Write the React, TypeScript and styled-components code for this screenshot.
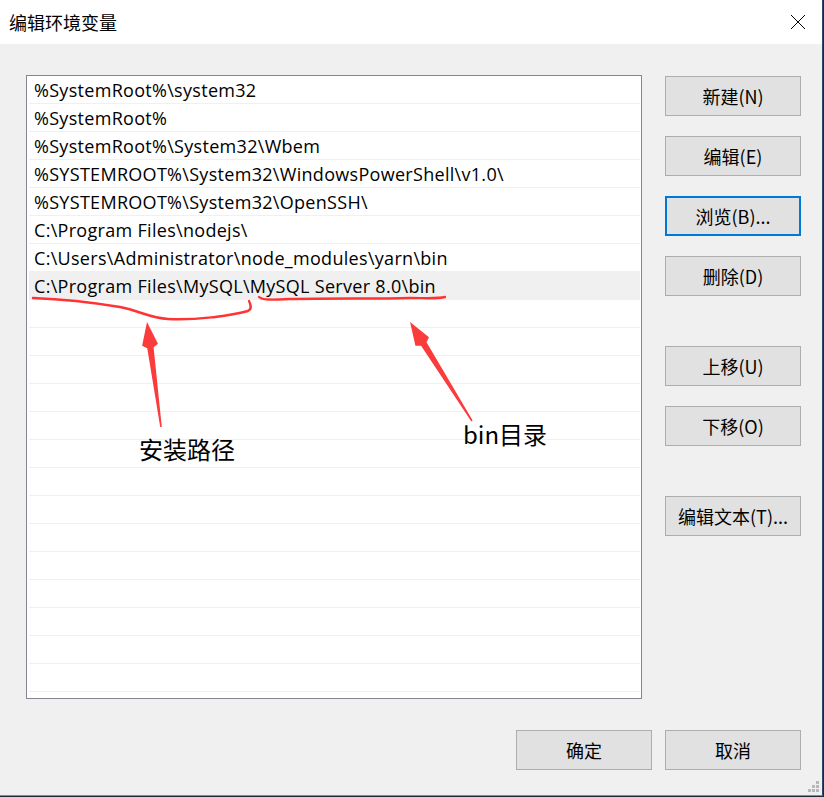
import React from 'react';
import styled, { createGlobalStyle } from 'styled-components';

const GlobalStyle = createGlobalStyle`
  html, body {
    margin: 0;
    padding: 0;
    background: #1c2b3c;
  }
  body {
    font-family: "Open Sans", "Noto Sans CJK SC", sans-serif;
    color: #000;
  }
`;

const Window = styled.div`
  position: relative;
  width: 822px;
  height: 795px;
  background: #f0f0f0;
  border-right: 1px solid #2b4a6b;
  border-bottom: 1px solid #8a8a8a;
  display: flex;
  flex-direction: column;
`;

const TitleBar = styled.div`
  height: 44px;
  background: #fff;
  display: flex;
  align-items: center;
  justify-content: space-between;
  padding: 0 0 0 9px;
`;

const Title = styled.span`
  font-family: "Noto Sans CJK SC", sans-serif;
  font-size: 18px;
  line-height: 1;
`;

const CloseButton = styled.div`
  width: 46px;
  height: 44px;
  display: flex;
  align-items: center;
  justify-content: center;
  margin-right: 1px;
`;

const Body = styled.div`
  flex: 1;
  display: grid;
  grid-template-columns: 616px 136px;
  column-gap: 23px;
  padding: 31px 21px 0 26px;
`;

const ListBox = styled.div`
  height: 622px;
  border: 1px solid #828790;
  background: #fff;
  padding: 0 1px;
  overflow: hidden;
`;

const Row = styled.div<{ $selected?: boolean }>`
  height: 27px;
  border-bottom: 1px solid #f0f0f0;
  margin-left: 1px;
  padding-left: 5px;
  display: flex;
  align-items: center;
  font-size: 18px;
  letter-spacing: 0.3px;
  white-space: nowrap;
  background: ${(p) => (p.$selected ? '#f0f0f0' : '#fff')};
`;

const ButtonColumn = styled.div`
  display: flex;
  flex-direction: column;
  padding-top: 1px;
`;

const Button = styled.button<{ $focused?: boolean; $gap?: number }>`
  width: 136px;
  height: 40px;
  margin-top: ${(p) => p.$gap ?? 0}px;
  background: #e1e1e1;
  border: ${(p) => (p.$focused ? '2px solid #0078d7' : '1px solid #adadad')};
  font-family: "Noto Sans CJK SC", sans-serif;
  font-size: 18px;
  color: #000;
  padding: 0;
  display: flex;
  align-items: center;
  justify-content: center;
`;

const Footer = styled.div`
  display: flex;
  justify-content: flex-end;
  gap: 13px;
  padding: 31px 21px 25px 0;
`;

const Grip = styled.div`
  position: absolute;
  right: 3px;
  bottom: 3px;
  width: 11px;
  height: 11px;
  display: grid;
  grid-template-columns: repeat(3, 3px);
  grid-template-rows: repeat(3, 3px);
  gap: 1px;
`;

const GripDot = styled.span<{ $on: boolean }>`
  background: ${(p) => (p.$on ? '#b8b8b8' : 'transparent')};
`;

const Overlay = styled.svg`
  position: absolute;
  left: 0;
  top: 0;
  pointer-events: none;
`;

const Note = styled.span<{ $x: number; $y: number }>`
  position: absolute;
  left: ${(p) => p.$x}px;
  top: ${(p) => p.$y}px;
  font-family: "Noto Sans CJK SC", sans-serif;
  font-size: 24px;
  line-height: 1;
  color: #000;
`;

const paths = [
  '%SystemRoot%\\system32',
  '%SystemRoot%',
  '%SystemRoot%\\System32\\Wbem',
  '%SYSTEMROOT%\\System32\\WindowsPowerShell\\v1.0\\',
  '%SYSTEMROOT%\\System32\\OpenSSH\\',
  'C:\\Program Files\\nodejs\\',
  'C:\\Users\\Administrator\\node_modules\\yarn\\bin',
  'C:\\Program Files\\MySQL\\MySQL Server 8.0\\bin',
];

const rows = [...paths, ...Array(14).fill('')];

const gripMap = [false, false, true, false, true, true, true, true, true];

// tapered red arrow: thin tail, widening shaft, triangular head
const Arrow = ({ tail, tip }: { tail: [number, number]; tip: [number, number] }) => {
  const dx = tip[0] - tail[0];
  const dy = tip[1] - tail[1];
  const len = Math.hypot(dx, dy);
  const ux = dx / len;
  const uy = dy / len;
  const nx = -uy;
  const ny = ux;
  const headLen = 26;
  const bx = tip[0] - ux * headLen;
  const by = tip[1] - uy * headLen;
  const pts = [
    [tail[0] + nx * 0.8, tail[1] + ny * 0.8],
    [bx + nx * 3.2, by + ny * 3.2],
    [bx + ux * 3 + nx * 8, by + uy * 3 + ny * 8],
    tip,
    [bx + ux * 3 - nx * 8, by + uy * 3 - ny * 8],
    [bx - nx * 3.2, by - ny * 3.2],
    [tail[0] - nx * 0.8, tail[1] - ny * 0.8],
  ];
  return <polygon points={pts.map((p) => p.join(',')).join(' ')} fill="#fb3c3c" />;
};

export default function App() {
  return (
    <>
      <GlobalStyle />
      <Window>
        <TitleBar>
          <Title>编辑环境变量</Title>
          <CloseButton>
            <svg width="16" height="16" viewBox="0 0 16 16">
              <path d="M1 1 L15 15 M15 1 L1 15" stroke="#000" strokeWidth="1" />
            </svg>
          </CloseButton>
        </TitleBar>
        <Body>
          <ListBox>
            {rows.map((text, i) => (
              <Row key={i} $selected={i === 7}>
                {text}
              </Row>
            ))}
          </ListBox>
          <ButtonColumn>
            <Button>新建(N)</Button>
            <Button $gap={20}>编辑(E)</Button>
            <Button $gap={20} $focused>浏览(B)...</Button>
            <Button $gap={20}>删除(D)</Button>
            <Button $gap={50}>上移(U)</Button>
            <Button $gap={20}>下移(O)</Button>
            <Button $gap={50}>编辑文本(T)...</Button>
          </ButtonColumn>
        </Body>
        <Footer>
          <Button>确定</Button>
          <Button>取消</Button>
        </Footer>
        <Grip>
          {gripMap.map((on, i) => (
            <GripDot key={i} $on={on} />
          ))}
        </Grip>

        <Overlay width="822" height="795">
          <path
            d="M33 298 C60 299 90 302 120 307 C140 311 150 318 168 319 C190 320 205 318 215 317 C230 315 240 313 248 311 C252 309 251 305 249 301"
            fill="none"
            stroke="#f33"
            strokeWidth="2.4"
            strokeLinecap="round"
          />
          <path
            d="M259 297 C262 300 270 300 290 299 C330 298 380 299 410 298 C425 298 438 299 445 297"
            fill="none"
            stroke="#f33"
            strokeWidth="2.4"
            strokeLinecap="round"
          />
          <Arrow tail={[161, 427]} tip={[147, 322]} />
          <Arrow tail={[472, 421]} tip={[410, 322]} />
        </Overlay>
        <Note $x={139} $y={437}>安装路径</Note>
        <Note $x={463} $y={422}>bin目录</Note>
      </Window>
    </>
  );
}
